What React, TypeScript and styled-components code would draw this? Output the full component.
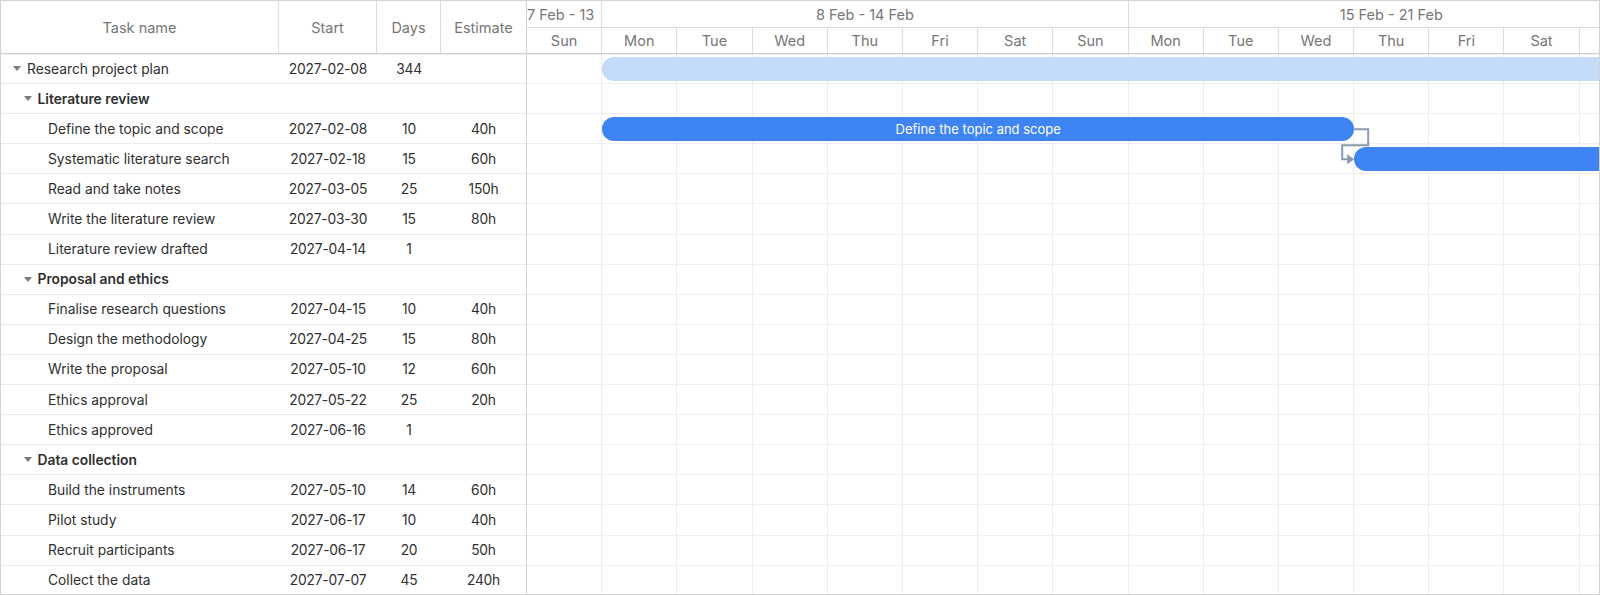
import React from 'react'
import styled, { createGlobalStyle } from 'styled-components'

const GlobalStyle = createGlobalStyle`
  html, body {
    margin: 0;
    padding: 0;
    background: #fff;
  }
  body {
    font-family: Inter, "Noto Sans", "Liberation Sans", sans-serif;
    color: #333;
  }
  * {
    box-sizing: border-box;
  }
`

const DAY_WIDTH = 75.2
const ROW_HEIGHT = 30.1
const TIMELINE_START = new Date('2027-02-07T00:00:00Z')

type Task = {
  name: string
  start?: string
  days?: number
  estimate?: string
  level: number
  kind: 'project' | 'group' | 'task'
}

const tasks: Task[] = [
  { name: 'Research project plan', start: '2027-02-08', days: 344, level: 0, kind: 'project' },
  { name: 'Literature review', level: 1, kind: 'group' },
  { name: 'Define the topic and scope', start: '2027-02-08', days: 10, estimate: '40h', level: 2, kind: 'task' },
  { name: 'Systematic literature search', start: '2027-02-18', days: 15, estimate: '60h', level: 2, kind: 'task' },
  { name: 'Read and take notes', start: '2027-03-05', days: 25, estimate: '150h', level: 2, kind: 'task' },
  { name: 'Write the literature review', start: '2027-03-30', days: 15, estimate: '80h', level: 2, kind: 'task' },
  { name: 'Literature review drafted', start: '2027-04-14', days: 1, level: 2, kind: 'task' },
  { name: 'Proposal and ethics', level: 1, kind: 'group' },
  { name: 'Finalise research questions', start: '2027-04-15', days: 10, estimate: '40h', level: 2, kind: 'task' },
  { name: 'Design the methodology', start: '2027-04-25', days: 15, estimate: '80h', level: 2, kind: 'task' },
  { name: 'Write the proposal', start: '2027-05-10', days: 12, estimate: '60h', level: 2, kind: 'task' },
  { name: 'Ethics approval', start: '2027-05-22', days: 25, estimate: '20h', level: 2, kind: 'task' },
  { name: 'Ethics approved', start: '2027-06-16', days: 1, level: 2, kind: 'task' },
  { name: 'Data collection', level: 1, kind: 'group' },
  { name: 'Build the instruments', start: '2027-05-10', days: 14, estimate: '60h', level: 2, kind: 'task' },
  { name: 'Pilot study', start: '2027-06-17', days: 10, estimate: '40h', level: 2, kind: 'task' },
  { name: 'Recruit participants', start: '2027-06-17', days: 20, estimate: '50h', level: 2, kind: 'task' },
  { name: 'Collect the data', start: '2027-07-07', days: 45, estimate: '240h', level: 2, kind: 'task' },
]

const weeks = [
  { label: '7 Feb - 13 Feb', days: 1 },
  { label: '8 Feb - 14 Feb', days: 7 },
  { label: '15 Feb - 21 Feb', days: 7 },
]
const dayNames = ['Sun', 'Mon', 'Tue', 'Wed', 'Thu', 'Fri', 'Sat', 'Sun', 'Mon', 'Tue', 'Wed', 'Thu', 'Fri', 'Sat', 'Sun']

const COLS = '278px 98px 64px 85px'

const dayOffset = (date: string) =>
  Math.round((new Date(date + 'T00:00:00Z').getTime() - TIMELINE_START.getTime()) / 86400000)

const Gantt = styled.div`
  display: flex;
  height: 595px;
  border: 1px solid #d3d3d3;
  overflow: hidden;
  font-size: 13.8px;
`

const GridPanel = styled.div`
  width: 526px;
  flex: none;
  border-right: 1px solid #d3d3d3;
  display: flex;
  flex-direction: column;
`

const GridHeader = styled.div`
  display: grid;
  grid-template-columns: ${COLS};
  height: 53px;
  flex: none;
  border-bottom: 1px solid #d0d0d0;
  box-shadow: 0 1px 0 #ececec;
`

const HeadCell = styled.div<{ $last?: boolean }>`
  display: flex;
  align-items: center;
  justify-content: center;
  color: #767676;
  font-size: 14.5px;
  border-right: ${(p) => (p.$last ? 'none' : '1px solid #dcdcdc')};
`

const GridRow = styled.div`
  display: grid;
  grid-template-columns: ${COLS};
  height: ${ROW_HEIGHT}px;
  flex: none;
  border-bottom: 1px solid #ebebeb;
`

const NameCell = styled.div<{ $level: number; $bold: boolean }>`
  display: flex;
  align-items: center;
  padding-left: ${(p) => 12 + p.$level * 10.5}px;
  font-weight: ${(p) => (p.$bold ? 600 : 400)};
  color: #2f2f2f;
  white-space: nowrap;
  overflow: hidden;
`

const Toggle = styled.span`
  width: 14px;
  flex: none;
  display: flex;
  align-items: center;
  &::before {
    content: '';
    border-left: 4px solid transparent;
    border-right: 4px solid transparent;
    border-top: 5px solid #7a7a7a;
  }
`

const Spacer = styled.span`
  width: 14px;
  flex: none;
`

const ValueCell = styled.div`
  display: flex;
  align-items: center;
  justify-content: center;
  color: #2f2f2f;
  letter-spacing: -0.2px;
`

const ChartPanel = styled.div`
  flex: 1;
  min-width: 0;
  overflow: hidden;
  display: flex;
  flex-direction: column;
`

const Scale = styled.div`
  width: ${DAY_WIDTH * dayNames.length}px;
  flex: none;
  border-bottom: 1px solid #d0d0d0;
  box-shadow: 0 1px 0 #ececec;
`

const ScaleRow = styled.div<{ $top?: boolean }>`
  display: flex;
  height: ${(p) => (p.$top ? 27 : 25)}px;
  border-bottom: ${(p) => (p.$top ? '1px solid #dcdcdc' : 'none')};
`

const ScaleCell = styled.div<{ $clipped?: boolean }>`
  flex: none;
  display: flex;
  align-items: center;
  justify-content: ${(p) => (p.$clipped ? 'flex-start' : 'center')};
  color: #767676;
  font-size: 14.5px;
  border-right: 1px solid #dcdcdc;
  white-space: nowrap;
  overflow: hidden;
`

const WeekLabel = styled.span<{ $clipped?: boolean }>`
  flex: none;
  max-width: ${(p) => (p.$clipped ? '70px' : 'none')};
  overflow: hidden;
`

const ChartBody = styled.div`
  position: relative;
  width: ${DAY_WIDTH * dayNames.length}px;
  flex: 1;
`

const Columns = styled.div`
  position: absolute;
  inset: 0;
  display: flex;
`

const Column = styled.div`
  flex: none;
  height: 100%;
  border-right: 1px solid #ededed;
`

const ChartRow = styled.div`
  position: relative;
  height: ${ROW_HEIGHT}px;
  border-bottom: 1px solid #efefef;
`

const Bar = styled.div<{ $summary: boolean }>`
  position: absolute;
  top: 3px;
  height: 24px;
  border-radius: 12px;
  background: ${(p) => (p.$summary ? '#c5dbfa' : '#3e84f3')};
  color: #fff;
  font-size: 13px;
  display: flex;
  align-items: center;
  justify-content: center;
  white-space: nowrap;
  overflow: hidden;
`

const Links = styled.svg`
  position: absolute;
  left: 0;
  top: 0;
  pointer-events: none;
  overflow: visible;
`

const Dependency: React.FC<{ fromX: number; fromRow: number; toX: number; toRow: number }> = ({
  fromX,
  fromRow,
  toX,
  toRow,
}) => {
  const y1 = fromRow * ROW_HEIGHT + 15
  const y2 = toRow * ROW_HEIGHT + 15
  const mid = toRow * ROW_HEIGHT + 1
  const d = `M ${fromX} ${y1} H ${fromX + 14} V ${mid} H ${toX - 12} V ${y2} H ${toX - 6}`
  return (
    <>
      <path d={d} fill="none" stroke="#8b9aab" strokeWidth={2} />
      <path d={`M ${toX - 7} ${y2 - 5} L ${toX} ${y2} L ${toX - 7} ${y2 + 5} Z`} fill="#8b9aab" />
    </>
  )
}

const App: React.FC = () => {
  const define = tasks[2]
  const search = tasks[3]
  const defineEnd = (dayOffset(define.start!) + define.days!) * DAY_WIDTH
  const searchStart = dayOffset(search.start!) * DAY_WIDTH

  return (
    <>
      <GlobalStyle />
      <Gantt>
        <GridPanel>
          <GridHeader>
            <HeadCell>Task name</HeadCell>
            <HeadCell>Start</HeadCell>
            <HeadCell>Days</HeadCell>
            <HeadCell $last>Estimate</HeadCell>
          </GridHeader>
          {tasks.map((t) => (
            <GridRow key={t.name}>
              <NameCell $level={t.level} $bold={t.kind === 'group'}>
                {t.kind === 'task' ? <Spacer /> : <Toggle />}
                {t.name}
              </NameCell>
              <ValueCell>{t.start}</ValueCell>
              <ValueCell>{t.days}</ValueCell>
              <ValueCell>{t.estimate}</ValueCell>
            </GridRow>
          ))}
        </GridPanel>

        <ChartPanel>
          <Scale>
            <ScaleRow $top>
              {weeks.map((w) => (
                <ScaleCell key={w.label} $clipped={w.days === 1} style={{ width: w.days * DAY_WIDTH }}>
                  <WeekLabel $clipped={w.days === 1}>{w.label}</WeekLabel>
                </ScaleCell>
              ))}
            </ScaleRow>
            <ScaleRow>
              {dayNames.map((d, i) => (
                <ScaleCell key={i} style={{ width: DAY_WIDTH }}>
                  {d}
                </ScaleCell>
              ))}
            </ScaleRow>
          </Scale>

          <ChartBody>
            <Columns>
              {dayNames.map((_, i) => (
                <Column key={i} style={{ width: DAY_WIDTH }} />
              ))}
            </Columns>
            {tasks.map((t) => (
              <ChartRow key={t.name}>
                {t.start && t.kind !== 'group' && (
                  <Bar
                    $summary={t.kind === 'project'}
                    style={{ left: dayOffset(t.start) * DAY_WIDTH, width: t.days! * DAY_WIDTH }}
                  >
                    {t.kind === 'task' && t.days! > 1 ? t.name : null}
                  </Bar>
                )}
              </ChartRow>
            ))}
            <Links width={1} height={1}>
              <Dependency fromX={defineEnd} fromRow={2} toX={searchStart} toRow={3} />
            </Links>
          </ChartBody>
        </ChartPanel>
      </Gantt>
    </>
  )
}

export default App
